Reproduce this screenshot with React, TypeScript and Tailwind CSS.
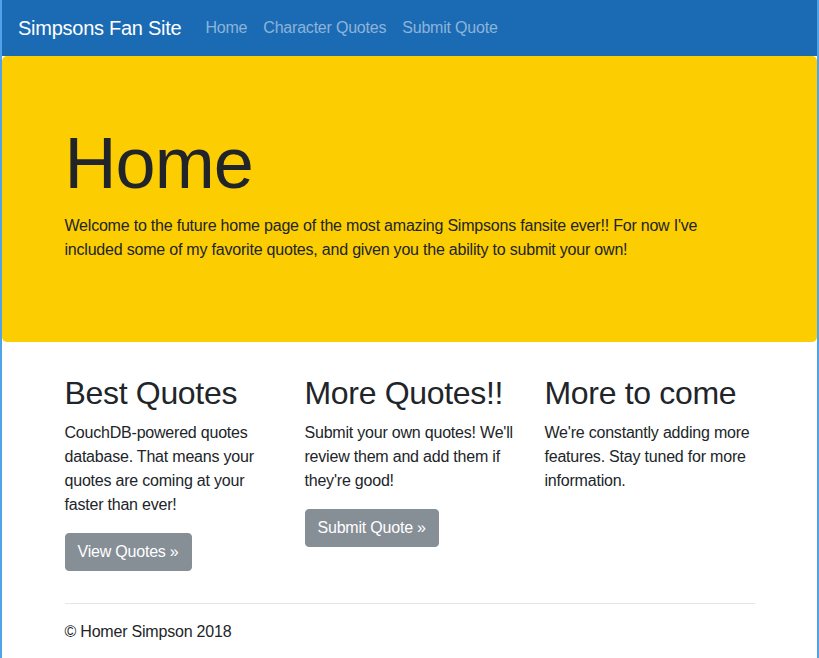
import React from "react";

const features = [
  {
    title: "Best Quotes",
    text: "CouchDB-powered quotes database. That means your quotes are coming at your faster than ever!",
    button: "View Quotes »",
  },
  {
    title: "More Quotes!!",
    text: "Submit your own quotes! We'll review them and add them if they're good!",
    button: "Submit Quote »",
  },
  {
    title: "More to come",
    text: "We're constantly adding more features. Stay tuned for more information.",
    button: null,
  },
];

export default function App() {
  return (
    <div className="min-h-screen border-x-2 border-[#4fa3e6] bg-white text-[#212529] tracking-[-0.013em] font-['Liberation_Sans',Arial,sans-serif]">
      <nav className="flex items-center h-14 px-4 bg-[#1a6ab4]">
        <a href="#" className="text-[20px] leading-[30px] tracking-[-0.013em] text-white mr-4">
          Simpsons Fan Site
        </a>
        <ul className="flex">
          <li>
            <a href="#" className="block px-2 py-2 text-white/50 text-base">
              Home
            </a>
          </li>
          <li>
            <a href="#" className="block px-2 py-2 text-white/50 text-base">
              Character Quotes
            </a>
          </li>
          <li>
            <a href="#" className="block px-2 py-2 text-white/50 text-base">
              Submit Quote
            </a>
          </li>
        </ul>
      </nav>

      <div className="bg-[#fccd00] rounded-[5px] py-16 mb-8">
        <div className="w-[720px] mx-auto px-[15px]">
          <h1 className="text-[72px] leading-[86.4px] tracking-[-0.013em] font-light mb-2">
            Home
          </h1>
          <p className="text-base leading-6 mb-4">
            Welcome to the future home page of the most amazing Simpsons fansite
            ever!! For now I've included some of my favorite quotes, and given
            you the ability to submit your own!
          </p>
        </div>
      </div>

      <div className="w-[720px] mx-auto px-[15px]">
        <div className="grid grid-cols-3 -mx-[15px]">
          {features.map((f) => (
            <div key={f.title} className="px-[15px]">
              <h2 className="text-[32px] leading-[38.4px] tracking-[-0.01em] mb-2">
                {f.title}
              </h2>
              <p className="text-base leading-6 mb-4">{f.text}</p>
              {f.button && (
                <p className="mb-4">
                  <a
                    href="#"
                    className="inline-block bg-[#868e96] border border-[#868e96] text-white text-base leading-6 px-3 py-1.5 rounded"
                  >
                    {f.button}
                  </a>
                </p>
              )}
            </div>
          ))}
        </div>
        <hr className="my-4 border-t border-black/10" />
        <footer>
          <p className="text-base leading-6 mb-4">© Homer Simpson 2018</p>
        </footer>
      </div>
    </div>
  );
}
